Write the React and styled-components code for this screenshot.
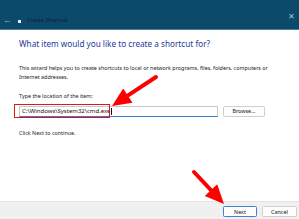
import React from 'react';
import styled, { createGlobalStyle } from 'styled-components';

const Global = createGlobalStyle`
  html, body { margin: 0; padding: 0; background: #fff; }
  body { font-family: "Noto Sans", "Open Sans", sans-serif; }
`;

const Window = styled.div`
  position: relative;
  width: 299px;
  height: 219px;
  display: flex;
  flex-direction: column;
  background: #fff;
  overflow: hidden;
`;

const TitleBar = styled.div`
  height: 30px;
  background: #0b4a6b;
  border-bottom: 1px solid #4d7d96;
  display: flex;
  align-items: flex-end;
  padding: 0 0 5px 3px;
  box-sizing: border-box;
  position: relative;
`;

const BackArrow = styled.span`
  color: #8fb0c4;
  font-size: 9px;
  line-height: 9px;
  width: 13px;
`;

const AppIcon = styled.span`
  width: 3px;
  height: 3px;
  background: #e8eef2;
  margin: 0 6px 1px 2px;
`;

const TitleText = styled.span`
  color: #0e1f2a;
  font-size: 5.5px;
  line-height: 7px;
`;

const Close = styled.span`
  position: absolute;
  right: 4px;
  top: 10px;
  color: #a9c3d3;
  font-size: 8px;
`;

const Body = styled.div`
  flex: 1;
  padding: 8px 0 0 19px;
  display: flex;
  flex-direction: column;
`;

const Heading = styled.div`
  color: #1c3a9c;
  font-size: 8.2px;
  line-height: 12px;
`;

const Para = styled.div`
  color: #222;
  font-size: 5.4px;
  line-height: 8.5px;
  margin-top: ${p => p.$top || 0}px;
  width: 270px;
`;

const InputRow = styled.div`
  display: flex;
  align-items: center;
  margin-top: 5px;
  gap: 5px;
`;

const Input = styled.div`
  width: 199px;
  height: 11px;
  border: 1px solid #c8c8c8;
  border-bottom: 1.5px solid #3a7ad6;
  box-sizing: border-box;
  font-size: 6px;
  line-height: 9px;
  color: #111;
  padding-left: 2px;
  display: flex;
  align-items: center;
`;

const Caret = styled.span`
  display: inline-block;
  width: 0.7px;
  height: 7px;
  background: #111;
  margin-left: 0.5px;
`;

const Button = styled.div`
  width: ${p => p.$w}px;
  height: 11px;
  box-sizing: border-box;
  border: 1px solid ${p => (p.$primary ? '#3f80d8' : '#cfcfcf')};
  background: #fdfdfd;
  border-radius: 1.5px;
  font-size: 5.4px;
  color: #111;
  display: flex;
  align-items: center;
  justify-content: center;
`;

const Footer = styled.div`
  height: 18px;
  background: #f0f0f0;
  border-top: 1px solid #e4e4e4;
  display: flex;
  justify-content: flex-end;
  align-items: center;
  gap: 5px;
  padding-right: 2px;
  padding-top: 2px;
  box-sizing: border-box;
`;

const Highlight = styled.div`
  position: absolute;
  left: 14px;
  top: 104px;
  width: 96px;
  height: 14px;
  border: 1.8px solid #e0141a;
  box-sizing: border-box;
`;

const Overlay = styled.svg`
  position: absolute;
  left: 0;
  top: 0;
  pointer-events: none;
`;

const Arrow = ({ x1, y1, x2, y2 }) => {
  const dx = x2 - x1;
  const dy = y2 - y1;
  const len = Math.hypot(dx, dy);
  const ux = dx / len;
  const uy = dy / len;
  const head = 19;
  const half = 8.5;
  const bx = x2 - ux * head;
  const by = y2 - uy * head;
  const px = -uy;
  const py = ux;
  return (
    <g>
      <line x1={x1} y1={y1} x2={bx + ux * 2} y2={by + uy * 2} stroke="#f00" strokeWidth="4" strokeLinecap="round" />
      <polygon
        points={`${x2},${y2} ${bx + px * half},${by + py * half} ${bx - px * half},${by - py * half}`}
        fill="#f00"
      />
    </g>
  );
};

export default function App() {
  return (
    <>
      <Global />
      <Window>
        <TitleBar>
          <BackArrow>←</BackArrow>
          <AppIcon />
          <TitleText>Create Shortcut</TitleText>
          <Close>✕</Close>
        </TitleBar>
        <Body>
          <Heading>What item would you like to create a shortcut for?</Heading>
          <Para $top={14}>
            This wizard helps you to create shortcuts to local or network programs, files, folders, computers or
            Internet addresses.
          </Para>
          <Para $top={11}>Type the location of the item:</Para>
          <InputRow>
            <Input>
              C:\Windows\System32\cmd.exe<Caret />
            </Input>
            <Button $w={42}>Browse...</Button>
          </InputRow>
          <Para $top={12}>Click Next to continue.</Para>
        </Body>
        <Footer>
          <Button $w={34} $primary>Next</Button>
          <Button $w={35}>Cancel</Button>
        </Footer>
        <Highlight />
        <Overlay width="299" height="219">
          <Arrow x1={156} y1={77} x2={112} y2={106} />
          <Arrow x1={194} y1={172} x2={224} y2={204} />
        </Overlay>
      </Window>
    </>
  );
}
